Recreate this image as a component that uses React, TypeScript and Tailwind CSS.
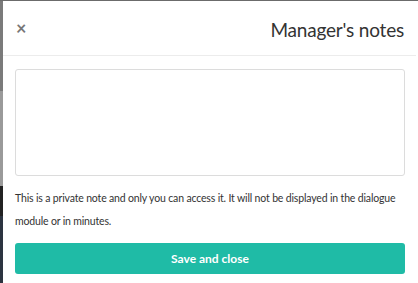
import React from "react";

export default function App() {
  return (
    <div className="w-[418px] h-[283px] bg-[#6b6b6b] flex flex-col overflow-hidden" style={{ fontFamily: "Lato, 'Noto Sans', sans-serif" }}>
      <div className="h-[1px] shrink-0" />
      <div className="flex flex-1">
        <div className="w-[3px] shrink-0 flex flex-col">
          <div className="h-[90px] bg-[#7a7a7a]" />
          <div className="h-[95px] bg-[#9a9a9a]" />
          <div className="h-[30px] bg-[#222]" />
          <div className="flex-1 bg-[#2c3440]" />
        </div>
        <div className="w-[413px] bg-white flex flex-col">
          <div className="h-[55px] flex items-center justify-between pl-[13px] pr-[12px] border-b border-[#ececec]">
            <span className="text-[#777] text-[18px] leading-none font-bold">×</span>
            <span className="text-[#333] text-[19px] leading-none pt-[3px] tracking-[-0.2px]">Manager's notes</span>
          </div>
          <div className="px-[12px] pt-[13px]">
            <textarea className="w-[390px] h-[107px] border border-[#dcdcdc] rounded-[3px] block resize-none outline-none" />
            <p className="text-[#333] text-[10.5px] leading-[23px] mt-[11px] tracking-[-0.16px]">
              This is a private note and only you can access it. It will not be displayed in the dialogue module or in minutes.
            </p>
            <button className="mt-[10px] w-[390px] h-[31px] bg-[#1fbba6] rounded-[3px] text-white text-[12px] font-bold">
              Save and close
            </button>
          </div>
        </div>
        <div className="w-[2px] bg-white" />
      </div>
    </div>
  );
}
